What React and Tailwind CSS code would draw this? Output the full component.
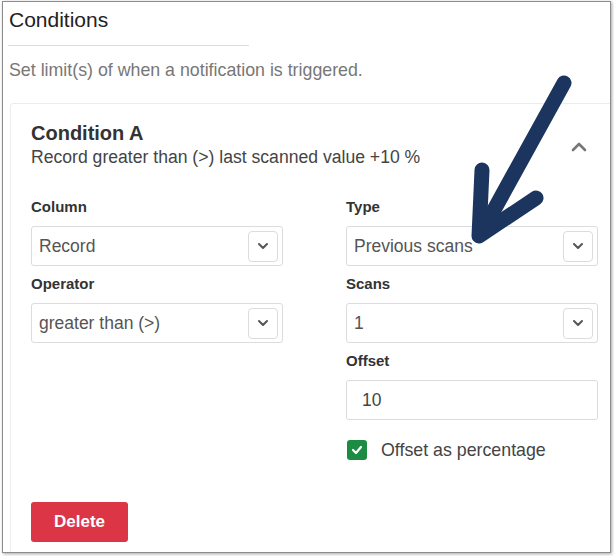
import React from "react";

const font = { fontFamily: '"Liberation Sans", Arial, sans-serif' };

function ChevronDown() {
  return (
    <svg width="12" height="8" viewBox="0 0 12 8">
      <polyline points="2,2 6,6 10,2" fill="none" stroke="#555" strokeWidth="2" strokeLinecap="round" strokeLinejoin="round" />
    </svg>
  );
}

function Select({ value }) {
  return (
    <div className="h-[40px] border border-[#dcdcdc] rounded-[3px] flex items-center justify-between pl-[7px] pr-[4px] bg-white">
      <span className="text-[17.5px] text-[#555]">{value}</span>
      <div className="w-[30px] h-[31px] border border-[#dcdcdc] rounded-[4px] flex items-center justify-center">
        <ChevronDown />
      </div>
    </div>
  );
}

function Label({ children, className = "" }) {
  return <div className={"h-[20px] leading-[20px] text-[15px] font-bold text-[#333] " + className}>{children}</div>;
}

export default function App() {
  return (
    <div className="w-[614px] h-[556px] bg-white pl-[2px] pt-[1px]" style={font}>
      <div className="relative w-[609px] h-[552px] border border-[#8c8c8c] overflow-hidden shadow-[1px_1px_3px_rgba(0,0,0,0.35)]">
        <div className="pt-[6px] pl-[6px] h-[30px] leading-[24px] text-[21px] text-[#222]">Conditions</div>
        <div className="mt-[13px] ml-[5px] w-[241px] border-t border-[#dedede]"></div>
        <div className="mt-[14px] pl-[6px] leading-[20px] text-[17.8px] text-[#777]">Set limit(s) of when a notification is triggered.</div>
        <div className="mt-[23px] ml-[7px] w-[609px] border border-[#ececec] rounded-[3px] pl-[20px] pr-[20px] pt-[17px] pb-[20px]">
          <div className="flex items-center justify-between">
            <div>
              <div className="h-[24px] leading-[24px] text-[20px] font-bold text-[#333]">Condition A</div>
              <div className="mt-[2px] h-[20px] leading-[20px] text-[17.6px] text-[#444]">Record greater than (&gt;) last scanned value +10 %</div>
            </div>
            <svg width="18" height="12" viewBox="0 0 18 12" className="mr-[10px] mt-[6px]">
              <polyline points="3,9 9,3 15,9" fill="none" stroke="#777" strokeWidth="2.6" strokeLinecap="round" strokeLinejoin="round" />
            </svg>
          </div>
          <div className="mt-[30px] grid grid-cols-[252px_252px] gap-x-[63px]">
            <div className="flex flex-col">
              <Label>Column</Label>
              <div className="mt-[9px]"><Select value="Record" /></div>
              <Label className="mt-[8px]">Operator</Label>
              <div className="mt-[9px]"><Select value="greater than (>)" /></div>
            </div>
            <div className="flex flex-col">
              <Label>Type</Label>
              <div className="mt-[9px]"><Select value="Previous scans" /></div>
              <Label className="mt-[8px]">Scans</Label>
              <div className="mt-[9px]"><Select value="1" /></div>
              <Label className="mt-[8px]">Offset</Label>
              <div className="mt-[9px] h-[40px] border border-[#dcdcdc] rounded-[3px] flex items-center pl-[15px]">
                <span className="text-[17.5px] text-[#444]">10</span>
              </div>
              <div className="mt-[20px] h-[20px] flex items-center pl-[1px] gap-[14px]">
                <div className="w-[20px] h-[20px] rounded-[3px] bg-[#1c8c43] flex items-center justify-center">
                  <svg width="12" height="10" viewBox="0 0 12 10">
                    <polyline points="2,5 5,8 10,2" fill="none" stroke="#fff" strokeWidth="2.2" strokeLinecap="round" strokeLinejoin="round" />
                  </svg>
                </div>
                <span className="text-[17.8px] text-[#444]">Offset as percentage</span>
              </div>
            </div>
          </div>
          <button className="mt-[42px] w-[97px] h-[40px] rounded-[3px] bg-[#dc3545] text-white font-bold text-[17px]">Delete</button>
        </div>
        <svg className="absolute left-0 top-0 pointer-events-none" width="609" height="552" viewBox="0 0 609 552">
          <g transform="translate(-3,-2)" fill="none" stroke="#1b355e" strokeWidth="15" strokeLinecap="round" strokeLinejoin="round">
            <line x1="564" y1="83" x2="484" y2="228" />
            <polyline points="482,170 479,236 536,198" />
          </g>
        </svg>
      </div>
    </div>
  );
}
